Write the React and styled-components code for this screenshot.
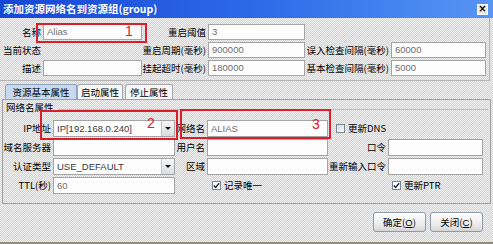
import React from 'react';
import styled, { createGlobalStyle } from 'styled-components';

const GlobalStyle = createGlobalStyle`
  html, body {
    margin: 0;
    padding: 0;
  }
  body {
    font-family: "Noto Sans CJK SC", "Liberation Sans", sans-serif;
  }
`;

const dither = `
  background-color: #e2e2e2;
  background-image: repeating-conic-gradient(#d3d3d3 0 25%, #f1f1f1 0 50%);
  background-size: 2px 2px;
`;

const Dialog = styled.div`
  position: relative;
  width: 493px;
  height: 244px;
  overflow: hidden;
  box-sizing: border-box;
  border-bottom: 2px solid #8c8c7c;
  display: flex;
  flex-direction: column;
  ${dither}
`;

const TitleBar = styled.div`
  flex: none;
  height: 18px;
  display: flex;
  align-items: center;
  justify-content: space-between;
  padding: 0 5px 0 3px;
  background: linear-gradient(to right, #1646d6, #2f6ce8 55%, #5796f5);
  color: #fff;
  font-weight: bold;
  font-size: 10.5px;
  line-height: 1;
`;

const CloseButton = styled.div`
  width: 11px;
  height: 11px;
  box-sizing: border-box;
  background: #ece9e0;
  border: 1px solid #fff;
  color: #000;
  font-family: "DejaVu Sans", sans-serif;
  font-size: 10px;
  font-weight: bold;
  display: flex;
  align-items: center;
  justify-content: center;
`;

const TopForm = styled.div`
  display: grid;
  grid-template-columns: 41px 99px 66px 97px 86px 95px;
  grid-auto-rows: 16px;
  row-gap: 2px;
  padding: 6px 0 4px 2px;
  margin-right: 3px;
  border-right: 1px solid #b2b2b2;
  border-bottom: 1px solid #b2b2b2;
`;

const Label = styled.div`
  font-size: 9.5px;
  line-height: ${p => p.$h || 16}px;
  color: #000;
  text-align: right;
  padding-right: 2px;
  white-space: nowrap;
  grid-column: ${p => p.$col || 'auto'};
`;

const Field = styled.div`
  box-sizing: border-box;
  height: 100%;
  border: 1px solid #a4a4a4;
  background: #fdfdfd;
  color: #6e6e6e;
  font-family: "Liberation Sans", sans-serif;
  font-size: 9.5px;
  line-height: ${p => p.$h || 14}px;
  padding-left: 3px;
  white-space: nowrap;
  overflow: hidden;
  grid-column: ${p => p.$col || 'auto'};
`;

const TabStrip = styled.div`
  display: flex;
  height: 15px;
  margin-top: 3px;
  padding-left: 5px;
`;

const Tab = styled.div`
  width: ${p => p.$w}px;
  box-sizing: border-box;
  margin-left: ${p => p.$gap || 0}px;
  border: 1px solid ${p => (p.$active ? '#8ea3c0' : '#a8a8a8')};
  border-bottom: none;
  border-radius: 3px 2px 0 0;
  background: ${p => (p.$active ? '#c8d9ee' : '#f6f6f6')};
  font-size: 9.5px;
  line-height: 14px;
  text-align: center;
  color: #000;
`;

const Panel = styled.div`
  margin: 0 2px;
  height: 105px;
  box-sizing: border-box;
  border: 1px solid #a0a0a0;
  padding-top: 2px;
`;

const GroupLegend = styled.div`
  display: flex;
  align-items: center;
  height: 11px;
  padding-left: 3px;
  font-size: 9.5px;
  line-height: 11px;
  &::after {
    content: '';
    flex: 1;
    margin: 4px 2px 0 4px;
    border-top: 1px solid #bcbcbc;
  }
`;

const PanelGrid = styled.div`
  display: grid;
  grid-template-columns: 50px 122px 32px 121px 60px 95px;
  grid-auto-rows: 17px;
  row-gap: 2px;
  margin-top: 7px;
`;

const Combo = styled.div`
  display: flex;
  box-sizing: border-box;
  height: 100%;
  border: 1px solid #a4a4a4;
  background: #fdfdfd;
  grid-column: ${p => p.$col || 'auto'};
`;

const ComboText = styled.div`
  flex: 1;
  padding-left: 3px;
  color: #3a3a3a;
  font-family: "Liberation Sans", sans-serif;
  font-size: 9.5px;
  line-height: 15px;
  white-space: nowrap;
  overflow: hidden;
`;

const ComboButton = styled.div`
  width: 12px;
  display: flex;
  align-items: center;
  justify-content: center;
  border-left: 1px solid #c4c4c4;
  background: linear-gradient(#f6f6f6, #d9dde3);
  &::after {
    content: '';
    border-left: 3px solid transparent;
    border-right: 3px solid transparent;
    border-top: 3px solid #111;
  }
`;

const Check = styled.div`
  display: flex;
  align-items: center;
  gap: 3px;
  padding-left: ${p => p.$indent || 0}px;
  font-size: 9.5px;
  line-height: 1;
  white-space: nowrap;
  grid-column: ${p => p.$col || 'auto'};
`;

const CheckBox = styled.span`
  width: 9px;
  height: 9px;
  box-sizing: border-box;
  border: 1px solid #7b8595;
  background: ${p => (p.$checked ? '#fbfbfb' : 'linear-gradient(135deg, #d6dbe3, #fafafa)')};
  display: flex;
  align-items: center;
  justify-content: center;
`;

const Footer = styled.div`
  display: flex;
  justify-content: flex-end;
  gap: 4px;
  padding: 8px 10px 0 0;
`;

const Button = styled.div`
  width: 53px;
  height: 20px;
  box-sizing: border-box;
  border: 1px solid #8f9aa8;
  border-radius: 3px;
  background: linear-gradient(#ffffff, #e9e9e9 70%, #d4d4d4);
  font-size: 9.5px;
  line-height: 18px;
  text-align: center;
  color: #000;
  u {
    font-family: "Liberation Sans", sans-serif;
  }
`;

const Annotation = styled.div`
  position: absolute;
  left: ${p => p.$x}px;
  top: ${p => p.$y}px;
  width: ${p => p.$w}px;
  height: ${p => p.$h}px;
  box-sizing: border-box;
  border: 2px solid #d91f2a;
  pointer-events: none;
`;

const AnnotationNumber = styled.div`
  position: absolute;
  left: ${p => p.$x}px;
  top: ${p => p.$y}px;
  color: #e0202a;
  font-family: "Liberation Sans", sans-serif;
  font-size: 14px;
  line-height: 1;
`;

function CheckMark() {
  return (
    <svg width="7" height="7" viewBox="0 0 7 7">
      <path d="M0.8 3.6 L2.6 5.4 L6.2 1.2" fill="none" stroke="#1e2a3a" strokeWidth="1.4" />
    </svg>
  );
}

export default function App() {
  return (
    <>
      <GlobalStyle />
      <Dialog>
        <TitleBar>
          <span>添加资源网络名到资源组(group)</span>
          <CloseButton>×</CloseButton>
        </TitleBar>

        <TopForm>
          <Label>名称</Label>
          <Field>Alias</Field>
          <Label>重启阈值</Label>
          <Field>3</Field>
          <div />
          <div />

          <Label>当前状态</Label>
          <div />
          <Label>重启周期(毫秒)</Label>
          <Field>900000</Field>
          <Label>误入检查间隔(毫秒)</Label>
          <Field>60000</Field>

          <Label>描述</Label>
          <Field />
          <Label>挂起超时(毫秒)</Label>
          <Field>180000</Field>
          <Label>基本检查间隔(毫秒)</Label>
          <Field>5000</Field>
        </TopForm>

        <TabStrip>
          <Tab $w={72} $active>资源基本属性</Tab>
          <Tab $w={46}>启动属性</Tab>
          <Tab $w={48} $gap={2}>停止属性</Tab>
        </TabStrip>

        <Panel>
          <GroupLegend>网络名属性</GroupLegend>
          <PanelGrid>
            <Label $h={17}>IP地址</Label>
            <Combo>
              <ComboText>IP[192.168.0.240]</ComboText>
              <ComboButton />
            </Combo>
            <Label $h={17}>网络名</Label>
            <Field $h={15}>ALIAS</Field>
            <Check $col="5 / 7" $indent={8}>
              <CheckBox />
              更新DNS
            </Check>

            <Label $h={17}>域名服务器</Label>
            <Field $h={15} />
            <Label $h={17}>用户名</Label>
            <Field $h={15} />
            <Label $h={17}>口令</Label>
            <Field $h={15} />

            <Label $h={17}>认证类型</Label>
            <Combo>
              <ComboText>USE_DEFAULT</ComboText>
              <ComboButton />
            </Combo>
            <Label $h={17}>区域</Label>
            <Field $h={15} />
            <Label $h={17}>重新输入口令</Label>
            <Field $h={15} />

            <Label $h={17}>TTL(秒)</Label>
            <Field $h={15}>60</Field>
            <div />
            <Check $indent={5}>
              <CheckBox $checked>
                <CheckMark />
              </CheckBox>
              记录唯一
            </Check>
            <div />
            <Check $indent={4}>
              <CheckBox $checked>
                <CheckMark />
              </CheckBox>
              更新PTR
            </Check>
          </PanelGrid>
        </Panel>

        <Footer>
          <Button>确定(<u>O</u>)</Button>
          <Button>关闭(<u>C</u>)</Button>
        </Footer>

        <Annotation $x={36} $y={23} $w={111} $h={20} />
        <AnnotationNumber $x={125} $y={24}>1</AnnotationNumber>
        <Annotation $x={40} $y={110} $w={138} $h={30} />
        <AnnotationNumber $x={147} $y={116}>2</AnnotationNumber>
        <Annotation $x={180} $y={109} $w={151} $h={30} />
        <AnnotationNumber $x={312} $y={117}>3</AnnotationNumber>
      </Dialog>
    </>
  );
}
